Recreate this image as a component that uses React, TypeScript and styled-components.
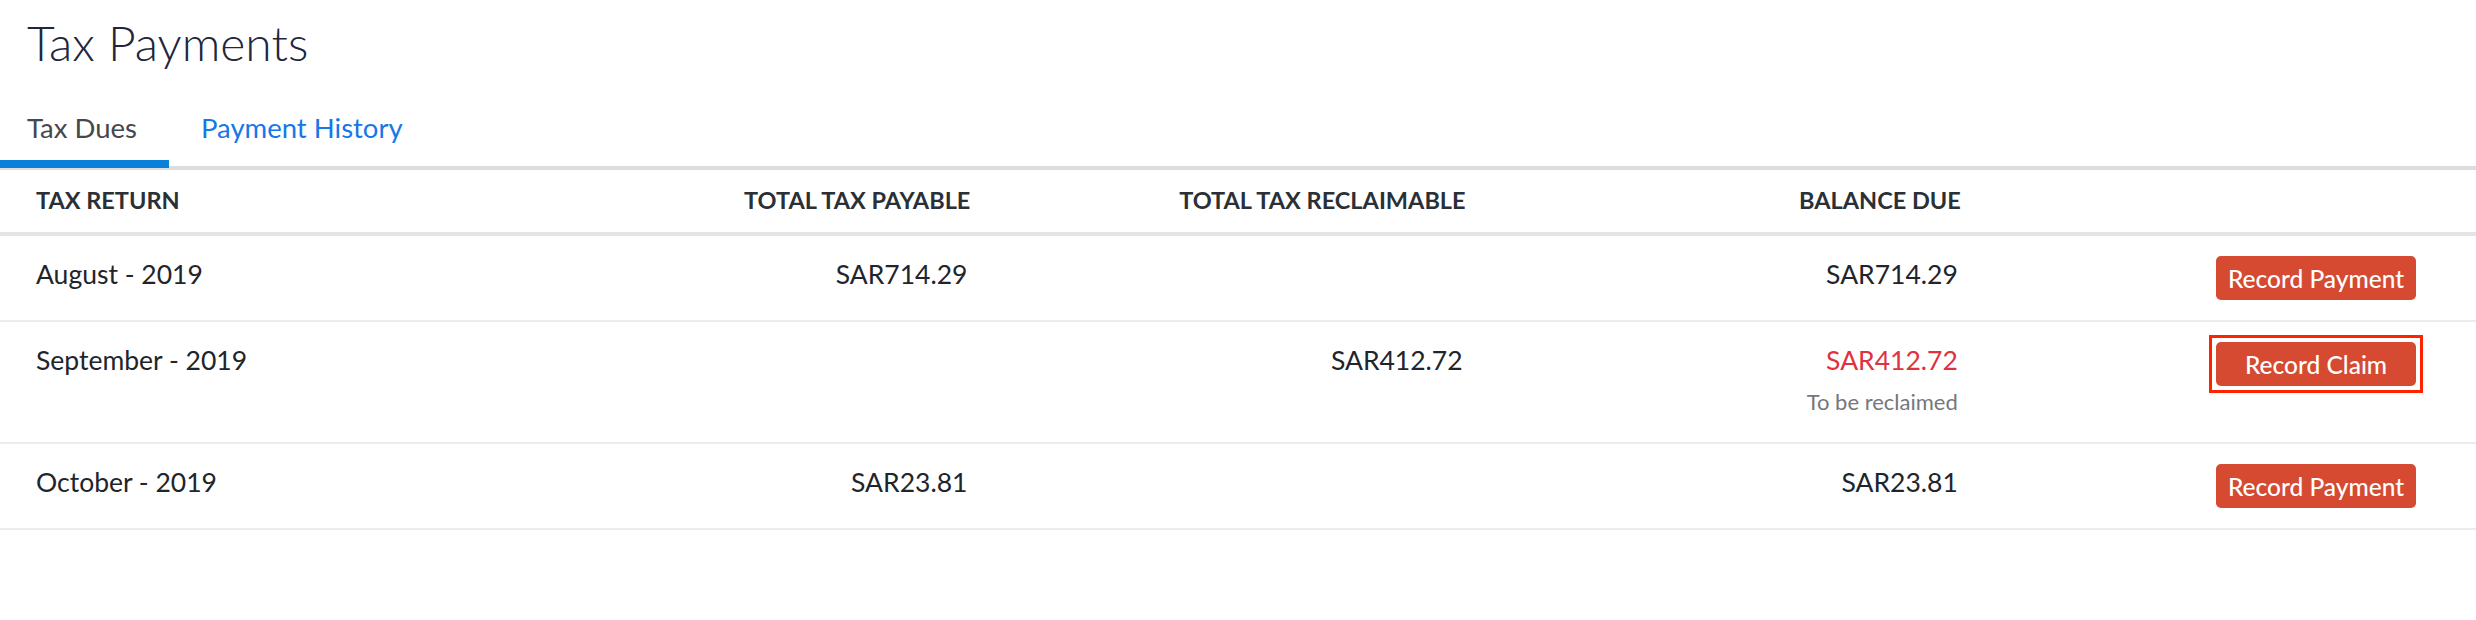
import React from "react";
import styled, { createGlobalStyle } from "styled-components";

const GlobalStyle = createGlobalStyle`
  html, body {
    margin: 0;
    padding: 0;
    background: #ffffff;
  }
  body {
    font-family: Lato, "Open Sans", "Liberation Sans", sans-serif;
    color: #21252b;
  }
`;

const Page = styled.div`
  width: 2476px;
  min-height: 620px;
  background: #ffffff;
`;

const Title = styled.h1`
  margin: 0;
  padding: 15px 0 0 27px;
  font-size: 48px;
  line-height: 56px;
  font-weight: 300;
  color: #21263c;
`;

const TabBar = styled.div`
  display: flex;
  margin-top: 23px;
  border-bottom: 4px solid #dddddd;
`;

const Tab = styled.div<{ $active?: boolean }>`
  padding: 18px 32px 24px ${(p) => (p.$active ? "27px" : "32px")};
  margin-bottom: -2px;
  font-size: 27.5px;
  line-height: 32px;
  color: ${(p) => (p.$active ? "#45484d" : "#1677e8")};
  box-shadow: ${(p) => (p.$active ? "inset 0 -8px 0 #0a80d8" : "none")};
`;

const Row = styled.div<{ $head?: boolean }>`
  display: grid;
  grid-template-columns: repeat(5, 1fr);
  border-bottom: ${(p) => (p.$head ? "4px solid #e4e4e4" : "2px solid #ececec")};
`;

const HeadCell = styled.div<{ $align?: "left" | "right" }>`
  padding: 16px ${(p) => (p.$align === "left" ? "0" : "20px")} 18px
    ${(p) => (p.$align === "left" ? "36px" : "0")};
  text-align: ${(p) => p.$align ?? "right"};
  font-size: 23.5px;
  line-height: 28px;
  font-weight: 700;
  color: #2a3036;
`;

const Cell = styled.div<{ $align?: "left" | "right" }>`
  padding: 20px ${(p) => (p.$align === "left" ? "0" : "23px")} 20px
    ${(p) => (p.$align === "left" ? "36px" : "0")};
  text-align: ${(p) => p.$align ?? "right"};
  font-size: 26.5px;
  line-height: 36px;
  color: #21252b;
`;

const Amount = styled.div<{ $negative?: boolean }>`
  color: ${(p) => (p.$negative ? "#e0323e" : "inherit")};
`;

const Note = styled.div`
  margin-top: 4px;
  font-size: 22px;
  line-height: 40px;
  color: #74777c;
`;

const ActionCell = styled.div`
  display: flex;
  justify-content: flex-end;
  align-items: flex-start;
  padding: 20px 60px 20px 0;
`;

const HighlightFrame = styled.div`
  display: flex;
  margin: -7px;
  padding: 4px;
  border: 3px solid #ff2200;
`;

const ActionButton = styled.button`
  width: 200px;
  height: 44px;
  padding: 0;
  border: none;
  border-radius: 5px;
  background: #d64a32;
  color: #ffffff;
  font-family: Lato, "Open Sans", "Liberation Sans", sans-serif;
  font-size: 24.5px;
  font-weight: 500;
  cursor: pointer;
`;

type Due = {
  period: string;
  payable?: string;
  reclaimable?: string;
  balance: string;
  claim?: boolean;
};

const dues: Due[] = [
  { period: "August - 2019", payable: "SAR714.29", balance: "SAR714.29" },
  { period: "September - 2019", reclaimable: "SAR412.72", balance: "SAR412.72", claim: true },
  { period: "October - 2019", payable: "SAR23.81", balance: "SAR23.81" },
];

export default function App() {
  return (
    <Page>
      <GlobalStyle />
      <Title>Tax Payments</Title>
      <TabBar>
        <Tab $active>Tax Dues</Tab>
        <Tab>Payment History</Tab>
      </TabBar>
      <Row $head>
        <HeadCell $align="left">TAX RETURN</HeadCell>
        <HeadCell>TOTAL TAX PAYABLE</HeadCell>
        <HeadCell>TOTAL TAX RECLAIMABLE</HeadCell>
        <HeadCell>BALANCE DUE</HeadCell>
        <HeadCell />
      </Row>
      {dues.map((d) => (
        <Row key={d.period}>
          <Cell $align="left">{d.period}</Cell>
          <Cell>{d.payable ?? ""}</Cell>
          <Cell>{d.reclaimable ?? ""}</Cell>
          <Cell>
            <Amount $negative={d.claim}>{d.balance}</Amount>
            {d.claim && <Note>To be reclaimed</Note>}
          </Cell>
          <ActionCell>
            {d.claim ? (
              <HighlightFrame>
                <ActionButton>Record Claim</ActionButton>
              </HighlightFrame>
            ) : (
              <ActionButton>Record Payment</ActionButton>
            )}
          </ActionCell>
        </Row>
      ))}
    </Page>
  );
}
